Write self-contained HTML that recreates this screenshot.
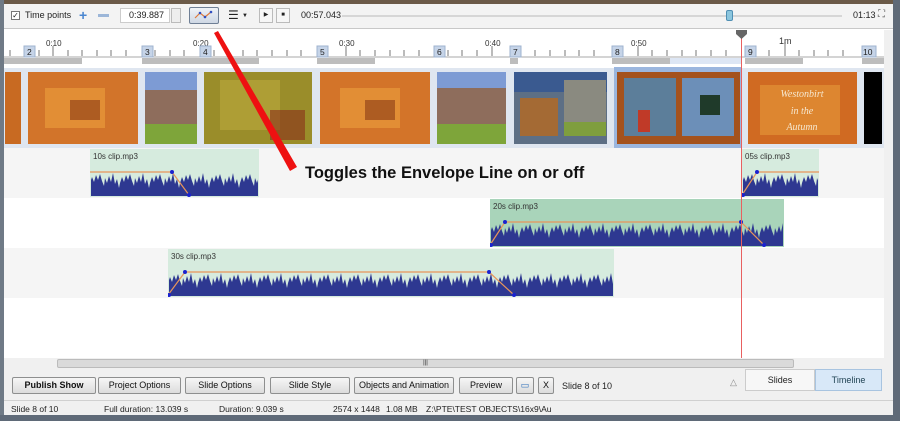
<!DOCTYPE html>
<html><head><meta charset="utf-8"><style>
*{margin:0;padding:0;box-sizing:border-box}
body{width:900px;height:421px;overflow:hidden;background:#fff;font-family:"Liberation Sans",sans-serif;position:relative;font-size:9px;color:#222}
.a{position:absolute}
.btn{position:absolute;top:377px;height:17px;border:1px solid #8e8f8f;border-radius:2px;background:linear-gradient(#f6f6f6,#dcdcdc);font-size:9px;text-align:center;line-height:15px;color:#111}
.st{position:absolute;top:404px;font-size:8.5px;color:#222}
</style></head><body>
<div class="a" style="left:0;top:0;width:900px;height:4px;background:#6b5a48"></div>
<div class="a" style="left:0;top:4px;width:900px;height:25px;background:#f3f3f3;border-bottom:1px solid #c8c8c8"></div>
<div class="a" style="left:0;top:0;width:4px;height:421px;background:#6f7a86"></div>
<div class="a" style="left:893px;top:0;width:7px;height:421px;background:#5f6a78"></div>
<div class="a" style="left:0;top:415px;width:900px;height:6px;background:#5f6a78"></div>
<!-- toolbar -->
<div class="a" style="left:11px;top:11px;width:9px;height:9px;border:1px solid #777;background:#fff;font-size:8px;line-height:7px;text-align:center">✓</div>
<div class="a" style="left:25px;top:10px;font-size:9px">Time points</div>
<div class="a" style="left:79px;top:9px;font-size:14px;color:#4a86d0;font-weight:bold;line-height:12px">+</div>
<div class="a" style="left:98px;top:14px;width:11px;height:3px;background:#9cb6d8"></div>
<div class="a" style="left:120px;top:8px;width:50px;height:15px;background:#fff;border:1px solid #ccc;font-size:9px;line-height:13px;padding-left:8px">0:39.887</div>
<div class="a" style="left:171px;top:8px;width:10px;height:15px;border:1px solid #bbb;background:#eee"></div>
<div class="a" style="left:189px;top:7px;width:30px;height:17px;border:1px solid #6f7f95;border-radius:2px;background:linear-gradient(#eef2f7,#cfd8e4)"></div>
<svg class="a" style="left:194px;top:10px" width="20" height="10"><polyline points="1,8 6,3 11,7 17,2" fill="none" stroke="#e07a3a" stroke-width="1.2"/><circle cx="6" cy="3" r="1.3" fill="#3050c0"/><circle cx="11" cy="7" r="1.3" fill="#3050c0"/><circle cx="17" cy="2" r="1.3" fill="#3050c0"/></svg>
<div class="a" style="left:228px;top:9px;font-size:12px;line-height:12px">☰</div>
<div class="a" style="left:242px;top:13px;font-size:6px">▼</div>
<div class="a" style="left:259px;top:8px;width:14px;height:15px;border:1px solid #bbb;background:#f6f6f6;font-size:6px;line-height:13px;text-align:center">▶</div>
<div class="a" style="left:276px;top:8px;width:14px;height:15px;border:1px solid #bbb;background:#f6f6f6;font-size:6px;line-height:13px;text-align:center">■</div>
<div class="a" style="left:301px;top:10px;font-size:9px">00:57.043</div>
<div class="a" style="left:342px;top:15px;width:500px;height:2px;background:#d6d6d6"></div>
<div class="a" style="left:726px;top:10px;width:7px;height:11px;background:#8cc6de;border:1px solid #4f8fb3;border-radius:2px"></div>
<div class="a" style="left:853px;top:10px;font-size:9px">01:13</div>
<div class="a" style="left:878px;top:9px;font-size:10px;color:#555">⛶</div>
<!-- timeline svg -->
<svg class="a" style="left:0;top:30px" width="893" height="340">
<defs>
<pattern id="w" width="30" height="48" patternUnits="userSpaceOnUse"><path d="M0,47 L0,34 L2,28 L4,33 L6,26 L8,31 L10,25 L12,32 L14,37 L15,29 L17,34 L19,27 L21,33 L23,24 L25,35 L27,30 L29,39 L30,34 L30,47 Z" fill="#2e3891"/></pattern>
</defs>
<rect x="4" y="0" width="880" height="340" fill="#fff"/>
<g stroke="#777" stroke-width="1">
<line x1="10" y1="20" x2="10" y2="26"/><line x1="24" y1="20" x2="24" y2="26"/><line x1="39" y1="20" x2="39" y2="26"/><line x1="53" y1="16" x2="53" y2="26"/><line x1="68" y1="20" x2="68" y2="26"/><line x1="82" y1="20" x2="82" y2="26"/><line x1="97" y1="20" x2="97" y2="26"/><line x1="111" y1="20" x2="111" y2="26"/><line x1="126" y1="20" x2="126" y2="26"/><line x1="155" y1="20" x2="155" y2="26"/><line x1="170" y1="20" x2="170" y2="26"/><line x1="184" y1="20" x2="184" y2="26"/><line x1="200" y1="16" x2="200" y2="26"/><line x1="214" y1="20" x2="214" y2="26"/><line x1="228" y1="20" x2="228" y2="26"/><line x1="243" y1="20" x2="243" y2="26"/><line x1="257" y1="20" x2="257" y2="26"/><line x1="272" y1="20" x2="272" y2="26"/><line x1="287" y1="20" x2="287" y2="26"/><line x1="301" y1="20" x2="301" y2="26"/><line x1="346" y1="16" x2="346" y2="26"/><line x1="360" y1="20" x2="360" y2="26"/><line x1="375" y1="20" x2="375" y2="26"/><line x1="390" y1="20" x2="390" y2="26"/><line x1="404" y1="20" x2="404" y2="26"/><line x1="419" y1="20" x2="419" y2="26"/><line x1="448" y1="20" x2="448" y2="26"/><line x1="462" y1="20" x2="462" y2="26"/><line x1="477" y1="20" x2="477" y2="26"/><line x1="492" y1="16" x2="492" y2="26"/><line x1="535" y1="20" x2="535" y2="26"/><line x1="550" y1="20" x2="550" y2="26"/><line x1="565" y1="20" x2="565" y2="26"/><line x1="579" y1="20" x2="579" y2="26"/><line x1="594" y1="20" x2="594" y2="26"/><line x1="638" y1="16" x2="638" y2="26"/><line x1="652" y1="20" x2="652" y2="26"/><line x1="667" y1="20" x2="667" y2="26"/><line x1="682" y1="20" x2="682" y2="26"/><line x1="696" y1="20" x2="696" y2="26"/><line x1="711" y1="20" x2="711" y2="26"/><line x1="726" y1="20" x2="726" y2="26"/><line x1="769" y1="20" x2="769" y2="26"/><line x1="785" y1="12" x2="785" y2="26"/><line x1="799" y1="20" x2="799" y2="26"/><line x1="814" y1="20" x2="814" y2="26"/><line x1="828" y1="20" x2="828" y2="26"/><line x1="843" y1="20" x2="843" y2="26"/>
</g>
<line x1="4" y1="27" x2="884" y2="27" stroke="#aaa"/>
<g font-size="8" fill="#333" font-family="Liberation Sans">
<text x="46" y="16">0:10</text><text x="193" y="16">0:20</text><text x="339" y="16">0:30</text><text x="485" y="16">0:40</text><text x="631" y="16">0:50</text><text x="779" y="14" font-size="9">1m</text>
</g>
<g fill="#c6d4e8" stroke="#9fb3cf">
<rect x="24" y="16" width="11" height="11"/><rect x="142" y="16" width="11" height="11"/><rect x="200" y="16" width="11" height="11"/><rect x="317" y="16" width="11" height="11"/><rect x="434" y="16" width="11" height="11"/><rect x="510" y="16" width="11" height="11"/><rect x="612" y="16" width="11" height="11"/><rect x="745" y="16" width="11" height="11"/><rect x="862" y="16" width="14" height="11"/>
</g>
<g font-size="8.5" fill="#222"><text x="27" y="25">2</text><text x="145" y="25">3</text><text x="203" y="25">4</text><text x="320" y="25">5</text><text x="437" y="25">6</text><text x="513" y="25">7</text><text x="615" y="25">8</text><text x="748" y="25">9</text><text x="863" y="25">10</text></g>
<g fill="#bdbdbd"><rect x="24" y="28" width="58" height="6"/><rect x="142" y="28" width="117" height="6"/><rect x="317" y="28" width="58" height="6"/><rect x="510" y="28" width="8" height="6"/><rect x="612" y="28" width="58" height="6"/><rect x="745" y="28" width="58" height="6"/><rect x="862" y="28" width="22" height="6"/></g>
<rect x="4" y="28" width="45" height="6" fill="#bdbdbd"/>
<rect x="670" y="28" width="71" height="6" fill="#dde6f4"/>
<rect x="4" y="38" width="880" height="80" fill="#dfe6f0"/>
<rect x="614" y="37" width="128" height="82" fill="#9bb6de"/>
<rect x="5" y="42" width="16" height="72" fill="#c86a22"/>
<rect x="28" y="42" width="110" height="72" fill="#d2742a"/><rect x="45" y="58" width="60" height="40" fill="#e89a3a" opacity=".7"/><rect x="70" y="70" width="30" height="20" fill="#8a3b16" opacity=".6"/>
<rect x="145" y="42" width="52" height="72" fill="#8e6d5c"/><rect x="145" y="42" width="52" height="18" fill="#7d9bd4"/><rect x="145" y="94" width="52" height="20" fill="#7ea53a"/>
<rect x="204" y="42" width="108" height="72" fill="#9a8d2a"/><rect x="220" y="50" width="60" height="50" fill="#b7a53b" opacity=".7"/><rect x="270" y="80" width="35" height="30" fill="#8b2f1a" opacity=".6"/>
<rect x="320" y="42" width="110" height="72" fill="#d37429"/><rect x="340" y="58" width="60" height="40" fill="#e89a3a" opacity=".7"/><rect x="365" y="70" width="30" height="20" fill="#8a3b16" opacity=".6"/>
<rect x="437" y="42" width="69" height="72" fill="#8e6d5c"/><rect x="437" y="42" width="69" height="16" fill="#7d9bd4"/><rect x="437" y="94" width="69" height="20" fill="#7ea53a"/>
<rect x="514" y="42" width="93" height="72" fill="#5d6f85"/><rect x="514" y="42" width="93" height="20" fill="#3a5a90"/><rect x="520" y="68" width="38" height="38" fill="#a46a34"/><rect x="564" y="50" width="42" height="56" fill="#8a8a80"/><rect x="564" y="92" width="42" height="14" fill="#7f9e3e"/>
<rect x="617" y="42" width="123" height="72" fill="#a4521d"/><rect x="624" y="48" width="52" height="58" fill="#5c7e9a"/><rect x="682" y="48" width="52" height="58" fill="#6c8fb8"/><rect x="700" y="65" width="20" height="20" fill="#1f3a2a"/><rect x="638" y="80" width="12" height="22" fill="#c03a28"/>
<rect x="748" y="42" width="109" height="72" fill="#d06a22"/><rect x="760" y="55" width="80" height="50" fill="#e69a3a" opacity=".6"/>
<g font-family="Liberation Serif" font-style="italic" font-size="10" fill="#f6e8d0" text-anchor="middle"><text x="802" y="67">Westonbirt</text><text x="802" y="84">in the</text><text x="802" y="100">Autumn</text></g>
<rect x="864" y="42" width="18" height="72" fill="#000"/>
<rect x="4" y="118" width="880" height="50" fill="#f5f5f5"/>
<rect x="4" y="218" width="880" height="50" fill="#f5f5f5"/>
<svg x="90" y="119" width="169" height="48"><rect width="169" height="48" fill="#d6ebde"/><text x="3" y="10" font-size="8" fill="#333">10s clip.mp3</text><rect x="1" y="20" width="167" height="27" fill="url(#w)"/><polyline points="0,23 82,23 99,46" fill="none" stroke="#e8955a" stroke-width="1.2"/><circle cx="82" cy="23" r="2" fill="#1a22d0"/><circle cx="99" cy="46" r="2" fill="#1a22d0"/></svg>
<svg x="742" y="119" width="77" height="48"><rect width="77" height="48" fill="#d6ebde"/><text x="3" y="10" font-size="8" fill="#333">05s clip.mp3</text><rect x="1" y="20" width="75" height="27" fill="url(#w)"/><polyline points="0,46 15,23 77,23" fill="none" stroke="#e8955a" stroke-width="1.2"/><circle cx="15" cy="23" r="2" fill="#1a22d0"/><circle cx="1" cy="46" r="2" fill="#1a22d0"/></svg>
<svg x="490" y="169" width="294" height="48"><rect width="294" height="48" fill="#a9d4ba"/><text x="3" y="10" font-size="8" fill="#333">20s clip.mp3</text><rect x="1" y="20" width="292" height="27" fill="url(#w)"/><polyline points="0,46 15,23 251,23 274,46" fill="none" stroke="#e8955a" stroke-width="1.2"/><circle cx="1" cy="46" r="2" fill="#1a22d0"/><circle cx="15" cy="23" r="2" fill="#1a22d0"/><circle cx="251" cy="23" r="2" fill="#1a22d0"/><circle cx="274" cy="46" r="2" fill="#1a22d0"/></svg>
<svg x="168" y="219" width="446" height="48"><rect width="446" height="48" fill="#d6ebde"/><text x="3" y="10" font-size="8" fill="#333">30s clip.mp3</text><rect x="1" y="20" width="444" height="27" fill="url(#w)"/><polyline points="0,46 17,23 321,23 346,46" fill="none" stroke="#e8955a" stroke-width="1.2"/><circle cx="1" cy="46" r="2" fill="#1a22d0"/><circle cx="17" cy="23" r="2" fill="#1a22d0"/><circle cx="321" cy="23" r="2" fill="#1a22d0"/><circle cx="346" cy="46" r="2" fill="#1a22d0"/></svg>
<rect x="741" y="4" width="1" height="326" fill="#e86060"/>
<path d="M736,0 L747,0 L747,4 L741.5,9 L736,4 Z" fill="#666"/>
<polygon points="214,3 218,1 297,137 290,141" fill="#ee1111"/>
<text x="305" y="148" font-size="16.5" font-weight="bold" fill="#111" font-family="Liberation Sans">Toggles the Envelope Line on or off</text>
<rect x="884" y="0" width="9" height="340" fill="#f0f0f0"/>
</svg>
<div class="a" style="left:4px;top:358px;width:889px;height:11px;background:#f0f0f0"></div>
<div class="a" style="left:57px;top:359px;width:737px;height:9px;background:#dadada;border:1px solid #bbb;border-radius:2px;font-size:6px;text-align:center;line-height:7px">|||</div>
<div class="a" style="left:4px;top:369px;width:889px;height:31px;background:#f0f0f0"></div>
<div class="btn" style="left:12px;width:84px;font-weight:bold">Publish Show</div>
<div class="btn" style="left:98px;width:83px">Project Options</div>
<div class="btn" style="left:185px;width:80px">Slide Options</div>
<div class="btn" style="left:270px;width:80px">Slide Style</div>
<div class="btn" style="left:354px;width:100px">Objects and Animation</div>
<div class="btn" style="left:459px;width:54px">Preview</div>
<div class="btn" style="left:516px;width:18px;color:#2a6ebb">▭</div>
<div class="btn" style="left:538px;width:16px">X</div>
<div class="a" style="left:562px;top:381px;font-size:9px">Slide 8 of 10</div>
<div class="a" style="left:730px;top:377px;font-size:9px;color:#888">△</div>
<div class="a" style="left:745px;top:369px;width:70px;height:22px;background:#f7f7f7;border:1px solid #ccc;text-align:center;line-height:20px;font-size:9px">Slides</div>
<div class="a" style="left:815px;top:369px;width:67px;height:22px;background:#d8e8f8;border:1px solid #a8c4e0;text-align:center;line-height:20px;font-size:9px;color:#245">Timeline</div>
<div class="a" style="left:4px;top:400px;width:889px;height:15px;background:#f0f0f0;border-top:1px solid #d0d0d0"></div>
<div class="st" style="left:11px">Slide 8 of 10</div>
<div class="st" style="left:104px">Full duration: 13.039 s</div>
<div class="st" style="left:219px">Duration: 9.039 s</div>
<div class="st" style="left:333px">2574 x 1448</div>
<div class="st" style="left:386px">1.08 MB</div>
<div class="st" style="left:426px">Z:\PTE\TEST OBJECTS\16x9\Au</div>
</body></html>
